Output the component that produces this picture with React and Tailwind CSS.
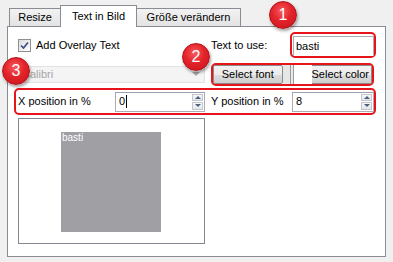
function Badge({ n, className }) {
  return (
    <div
      className={`absolute w-[28px] h-[28px] rounded-full border border-[#b3121a] bg-[radial-gradient(circle_at_45%_35%,#f85a5e_0%,#e2232a_45%,#c8141c_100%)] shadow-[1px_2px_3px_rgba(0,0,0,0.35)] flex items-center justify-center text-white text-[16px] leading-none ${className}`}
    >
      {n}
    </div>
  );
}

function Spin({ value, width, caret }) {
  return (
    <div className={`${width} h-[20px] bg-white border border-[#abadb3] border-t-[#9aa0a9] flex items-center`}>
      <div className="flex-1 pl-[3px] text-[11px] flex items-center">
        <span>{value}</span>
        {caret && <span className="w-px h-[13px] bg-black ml-[1px]" />}
      </div>
      <div className="w-[11px] h-full flex flex-col gap-px py-px mr-px">
        <div className="flex-1 border border-[#c4c8ce] bg-[linear-gradient(#f6f7f8,#e4e6ea)] flex items-center justify-center">
          <div className="w-0 h-0 border-l-[3px] border-r-[3px] border-b-[3px] border-l-transparent border-r-transparent border-b-[#4d5f80]" />
        </div>
        <div className="flex-1 border border-[#c4c8ce] bg-[linear-gradient(#f6f7f8,#e4e6ea)] flex items-center justify-center">
          <div className="w-0 h-0 border-l-[3px] border-r-[3px] border-t-[3px] border-l-transparent border-r-transparent border-t-[#4d5f80]" />
        </div>
      </div>
    </div>
  );
}

export default function App() {
  return (
    <div className="w-[393px] h-[262px] bg-[#f0f0f0] relative overflow-hidden text-[11px] text-black font-['Liberation_Sans',Arial,sans-serif]">
      {/* tabs */}
      <div className="h-[26px] flex items-end pl-[9px]">
        <div className="w-[51px] h-[18px] border-l border-t border-[#898c95] bg-[linear-gradient(#f2f2f2,#e3e3e3)] flex items-center justify-center">
          Resize
        </div>
        <div className="relative z-10 w-[77px] h-[22px] -mb-px border-l border-t border-r border-[#898c95] bg-white flex items-center justify-center">
          Text in Bild
        </div>
        <div className="w-[104px] h-[18px] border-t border-r border-[#898c95] bg-[linear-gradient(#f2f2f2,#e3e3e3)] flex items-center justify-center">
          Größe verändern
        </div>
      </div>

      {/* pane */}
      <div className="ml-[7px] w-[379px] h-[231px] border border-[#898c95] bg-white flex flex-col px-[6px]">
        {/* row 1 */}
        <div className="mt-[5px] h-[26px] flex items-center">
          <div className="w-[197px] pl-[4px] flex items-center gap-[5px]">
            <div className="w-[13px] h-[13px] border border-[#8f8f8f] bg-[linear-gradient(135deg,#dcdcdc,#ffffff)] flex items-center justify-center">
              <svg width="9" height="9" viewBox="0 0 9 9">
                <path d="M1 4.5 L3.5 7 L8 1.5" fill="none" stroke="#3b4f8c" strokeWidth="1.7" />
              </svg>
            </div>
            <span>Add Overlay Text</span>
          </div>
          <div className="w-[79px]">Text to use:</div>
          <div className="w-[86px] h-[26px] border-2 border-[#e8141b] rounded-[5px] flex items-start">
            <div className="ml-px mt-[2px] w-[81px] h-[20px] bg-white border-t border-l border-r border-[#abadb3] flex items-center pl-[2px]">
              basti
            </div>
          </div>
        </div>

        {/* row 2 */}
        <div className="mt-[4px] h-[24px] flex items-center">
          <div className="w-[191px] h-[17px] bg-[#f4f4f4] border border-[#e2e2e2] flex items-center justify-between pl-[7px] pr-[4px] text-[#a5a5a5]">
            <span>Calibri</span>
            <div className="w-0 h-0 border-l-[4px] border-r-[4px] border-t-[4px] border-l-transparent border-r-transparent border-t-[#a9a9a9]" />
          </div>
          <div className="ml-[6px] w-[163px] h-[23px] border-2 border-[#e8141b] rounded-[5px] flex items-center">
            <div className="w-[71px] h-[19px] border border-[#8a8a8a] rounded-[2px] bg-[linear-gradient(#f3f3f3_0%,#ebebeb_50%,#dddddd_51%,#cfcfcf_100%)] flex items-center justify-center whitespace-nowrap">
              Select font
            </div>
            <div className="flex-1 h-[19px] flex">
              <div className="w-[7px] bg-[#e6e6e6]" />
              <div className="w-[4px] border-l border-r border-[#9a9a9a] bg-[#e9e9e9]" />
              <div className="w-[18px] bg-white" />
              <div className="flex-1 border-r border-t border-b border-[#8a8a8a] rounded-r-[2px] bg-[linear-gradient(#f3f3f3_0%,#ebebeb_50%,#dddddd_51%,#cfcfcf_100%)] flex items-center justify-end pr-[2px] whitespace-nowrap">
                Select color
              </div>
            </div>
          </div>
        </div>

        {/* row 3 */}
        <div className="mt-[2px] w-[362px] h-[27px] border-2 border-[#e8141b] rounded-[5px] flex items-center pl-[2px]">
          <div className="w-[97px]">X position in %</div>
          <Spin value="0" width="w-[90px]" caret />
          <div className="ml-[6px] w-[81px]">Y position in %</div>
          <Spin value="8" width="w-[82px]" />
        </div>

        {/* preview */}
        <div className="mt-[3px] ml-[4px] w-[187px] h-[126px] border border-[#838790] pl-[42px] pt-[13px]">
          <div className="w-[100px] h-[100px] bg-[#a09fa4] text-white text-[10px] leading-none pl-px pt-px">
            basti
          </div>
        </div>
      </div>

      <Badge n="1" className="left-[269px] top-[1px]" />
      <Badge n="2" className="left-[182px] top-[43px]" />
      <Badge n="3" className="left-[2px] top-[57px]" />
    </div>
  );
}
